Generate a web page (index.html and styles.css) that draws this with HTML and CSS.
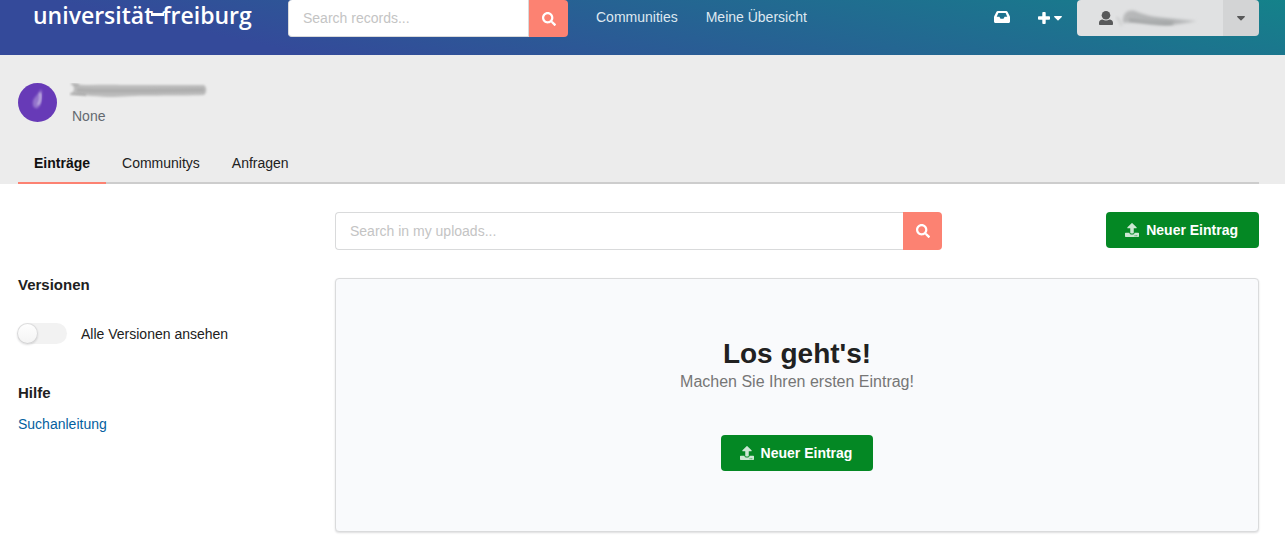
FILE: index.html
```html
<!DOCTYPE html>
<html lang="de">
<head>
<meta charset="utf-8">
<meta name="viewport" content="width=device-width, initial-scale=1">
<title>Einträge</title>
<link rel="stylesheet" href="styles.css">
</head>
<body>
<svg class="sprite" aria-hidden="true">
  <symbol id="i-search" viewBox="0 0 512 512"><path d="M505 442.700L405.300 343c-4.500-4.500-10.600-7-17-7H372c27.600-35.300 44-79.700 44-128C416 93.100 322.900 0 208 0S0 93.100 0 208s93.100 208 208 208c48.300 0 92.700-16.400 128-44v16.300c0 6.400 2.500 12.500 7 17l99.700 99.700c9.400 9.400 24.600 9.400 33.900 0l28.300-28.300c9.400-9.400 9.400-24.600.1-34zM208 336c-70.700 0-128-57.200-128-128 0-70.700 57.200-128 128-128 70.700 0 128 57.200 128 128 0 70.700-57.200 128-128 128z"/></symbol>
  <symbol id="i-upload" viewBox="0 0 512 512"><path d="M296 384h-80c-13.300 0-24-10.700-24-24V192h-87.700c-17.800 0-26.700-21.500-14.100-34.100L242.300 5.700c7.500-7.500 19.800-7.500 27.300 0l152.200 152.200c12.600 12.600 3.700 34.100-14.100 34.100H320v168c0 13.300-10.700 24-24 24zm216-8v112c0 13.300-10.700 24-24 24H24c-13.300 0-24-10.700-24-24V376c0-13.300 10.700-24 24-24h136v8c0 30.900 25.100 56 56 56h80c30.900 0 56-25.100 56-56v-8h136c13.300 0 24 10.700 24 24zm-124 88c0-11-9-20-20-20s-20 9-20 20 9 20 20 20 20-9 20-20zm64 0c0-11-9-20-20-20s-20 9-20 20 9 20 20 20 20-9 20-20z"/></symbol>
  <symbol id="i-inbox" viewBox="0 0 16 12"><path fill-rule="evenodd" d="M3.800 0h8.400c.6 0 1 .3 1.300.7l2.300 4.500c.1.300.2.500.2.800v4.500c0 .8-.6 1.500-1.500 1.500h-13C.6 12 0 11.300 0 10.500V6c0-.3.100-.5.200-.8L2.500.7C2.800.3 3.200 0 3.800 0zm.6 2.100L2.700 5.800h2.700L6.500 7.700h3l1.100-1.900h2.700l-1.700-3.700z"/></symbol>
  <symbol id="i-plus" viewBox="0 0 12 12"><path d="M11.200 4.300H7.700V.8c0-.4-.4-.8-.8-.8H5.100c-.4 0-.8.4-.8.8v3.500H.8c-.4 0-.8.4-.8.8v1.800c0 .4.400.8.800.8h3.500v3.500c0 .4.400.8.800.8h1.800c.4 0 .8-.4.800-.8V7.700h3.500c.4 0 .8-.4.800-.8V5.100c0-.4-.4-.8-.8-.8z"/></symbol>
  <symbol id="i-caret" viewBox="0 0 8 5"><path d="M.6 0h6.800c.5 0 .7.600.4 1L4.500 4.300c-.3.300-.7.300-1 0L.2 1C-.1.600.1 0 .6 0z"/></symbol>
  <symbol id="i-user" viewBox="0 0 14 14"><circle cx="7" cy="4.300" r="4.300"/><path d="M3.500 8.500c2.200 1.300 4.800 1.300 7 0C12.600 8.500 14 10 14 11.800V13c0 .6-.4 1-1 1H1c-.6 0-1-.4-1-1v-1.200C0 10 1.400 8.500 3.500 8.500z"/></symbol>
</svg>

<header class="topbar">
  <div class="container topbar-row">
    <a class="brand" href="#">universität<span class="brand-bar"></span>freiburg</a>
    <form class="search search-top">
      <input class="search-input" type="text" placeholder="Search records..." aria-label="Search records">
      <button class="search-button" type="button" aria-label="Suchen"><svg class="icon"><use href="#i-search"/></svg></button>
    </form>
    <nav class="nav">
      <a href="#">Communities</a>
      <a href="#">Meine Übersicht</a>
    </nav>
    <div class="tools">
      <a class="tool" href="#" aria-label="Anfragen"><svg class="icon icon-inbox"><use href="#i-inbox"/></svg></a>
      <button class="tool" type="button" aria-label="Neu"><svg class="icon icon-plus"><use href="#i-plus"/></svg><svg class="caret"><use href="#i-caret"/></svg></button>
      <div class="account">
        <button class="account-main" type="button" aria-label="Profil">
          <svg class="icon"><use href="#i-user"/></svg>
          <svg class="account-name" viewBox="0 0 84 24" aria-hidden="true">
            <defs><filter id="soft" x="-10" y="-10" width="110" height="44" filterUnits="userSpaceOnUse"><feGaussianBlur stdDeviation="1.500"/></filter>
            <linearGradient id="fade"><stop offset="0" stop-color="#b9babb"/><stop offset=".6" stop-color="#aeb0b1"/><stop offset="1" stop-color="#c0c1c2"/></linearGradient></defs>
            <path d="M8 17C7 8 12 3 20 5c10 4 18 6 30 7l32 3c-10 2-22 4-32 4-14-1-28-4-42-2z" fill="url(#fade)" filter="url(#soft)"/>
            <path d="M1 12c4-1 3 4 6 8" stroke="#cccdce" stroke-width="2" fill="none" filter="url(#soft)"/>
            <path d="M14 14c14 2 32 5 44 3" stroke="#a3a5a6" stroke-width="3" fill="none" filter="url(#soft)"/>
          </svg>
        </button>
        <button class="account-more" type="button" aria-label="Menü"><svg class="caret"><use href="#i-caret"/></svg></button>
      </div>
    </div>
  </div>
</header>

<section class="profile">
  <div class="container">
    <div class="identity">
      <svg class="avatar" viewBox="0 0 39 39" aria-hidden="true">
        <defs><filter id="haze" x="-60%" y="-20%" width="220%" height="140%"><feGaussianBlur stdDeviation="1"/></filter></defs>
        <circle cx="19.500" cy="19.500" r="19.500" fill="#673ab7"/>
        <path d="M23 6c2 5 1 13-3 19-3 1-6-1-5-7 1-4 5-6 8-12z" fill="#9474cc" filter="url(#haze)"/>
        <path d="M22 10c1 4 0 9-2 12" stroke="#c9bbe5" stroke-width="2" fill="none" filter="url(#haze)"/>
      </svg>
      <div class="identity-text">
        <svg class="identity-name" viewBox="0 0 140 18" aria-hidden="true">
          <defs><filter id="smear" x="-10" y="-10" width="160" height="40" filterUnits="userSpaceOnUse"><feGaussianBlur stdDeviation="1.200 .8"/></filter></defs>
          <path d="M4 1c14 2 30 0 48 1h83c3 2 3 8 0 10-28 1-66 0-90 2-14 0-30-2-43-3l3-4z" fill="#bcbcbc" filter="url(#smear)"/>
          <path d="M8 7c20 2 90 0 127 0" stroke="#aeaeae" stroke-width="4" fill="none" filter="url(#smear)"/>
          <path d="M1 11l16 1M2 1l8 1" stroke="#8a8a8a" stroke-width="1" filter="url(#smear)"/>
        </svg>
        <div class="identity-sub">None</div>
      </div>
    </div>
    <nav class="tabs">
      <a class="tab tab-active" href="#">Einträge</a>
      <a class="tab" href="#">Communitys</a>
      <a class="tab" href="#">Anfragen</a>
    </nav>
  </div>
</section>

<main class="container layout">
  <aside class="sidebar">
    <h2 class="side-title">Versionen</h2>
    <label class="toggle"><input class="toggle-input" type="checkbox">Alle Versionen ansehen</label>
    <h2 class="side-title">Hilfe</h2>
    <a class="side-link" href="#">Suchanleitung</a>
  </aside>
  <div class="content">
    <div class="content-bar">
      <form class="search search-uploads">
        <input class="search-input" type="text" placeholder="Search in my uploads..." aria-label="Search in my uploads">
        <button class="search-button" type="button" aria-label="Suchen"><svg class="icon"><use href="#i-search"/></svg></button>
      </form>
      <button class="primary" type="button"><svg class="icon"><use href="#i-upload"/></svg>Neuer Eintrag</button>
    </div>
    <section class="empty">
      <h1 class="empty-title">Los geht's!</h1>
      <p class="empty-text">Machen Sie Ihren ersten Eintrag!</p>
      <button class="primary" type="button"><svg class="icon"><use href="#i-upload"/></svg>Neuer Eintrag</button>
    </section>
  </div>
</main>
</body>
</html>
```

FILE: styles.css
```css
* { box-sizing: border-box; }

body {
  margin: 0;
  background: #fff;
  color: #212121;
  font: 14px/20px "Liberation Sans", Arial, sans-serif;
}

a { color: inherit; text-decoration: none; }
button, input { margin: 0; font: inherit; }
button { border: 0; padding: 0; cursor: pointer; }

.sprite { position: absolute; width: 0; height: 0; }
.container { padding: 0 26px 0 18px; }
.icon { display: block; width: 14px; height: 14px; fill: currentColor; }
.caret { display: block; width: 8px; height: 5px; fill: currentColor; }

/* Top bar */
.topbar {
  background: linear-gradient(12deg, #344a9a 20%, #14828a 100%);
  padding-bottom: 18px;
}
.topbar-row { display: flex; align-items: flex-start; }
.brand {
  width: 270px;
  padding-left: 15px;
  color: #fff;
  font: 600 23px/30px "Open Sans", sans-serif;
  white-space: nowrap;
}
.brand-bar {
  display: inline-block;
  width: 13px;
  height: 3px;
  margin: 0 -2px;
  background: #fff;
  vertical-align: 8px;
}

.search { display: flex; height: 38px; }
.search-top { width: 280px; height: 37px; }
.search-input {
  flex: 1;
  min-width: 0;
  padding: 0 14px;
  border: 1px solid #d9dadb;
  border-radius: 4px 0 0 4px;
  background: #fff;
  color: #212121;
}
.search-uploads .search-input { border-right: 0; }
.search-top .search-input { border-top: 0; }
.search-input::placeholder { color: #c4c4c4; opacity: 1; }
.search-button {
  display: grid;
  place-items: center;
  width: 39px;
  border-radius: 0 4px 4px 0;
  background: #fc8272;
  color: #fff;
}

.nav { display: flex; gap: 28px; padding: 7px 28px; color: #dfe8f0; }
.tools { display: flex; margin-left: auto; color: #fff; }
.tool {
  display: flex;
  align-items: center;
  gap: 4px;
  height: 36px;
  margin-right: 15px;
  background: none;
  color: #fff;
}
.tool:first-child { height: 34px; margin-right: 28px; }
.icon-inbox { width: 16px; height: 12px; }
.icon-plus { width: 12px; height: 12px; }
.account { display: flex; height: 36px; border-radius: 4px; overflow: hidden; color: #58595a; }
.account-main {
  display: flex;
  align-items: center;
  gap: 2px;
  width: 146px;
  padding-left: 22px;
  background: #e0e1e2;
  color: inherit;
}
.account-name { width: 84px; height: 24px; }
.account-more { display: grid; place-items: center; width: 36px; background: #d3d4d5; color: inherit; }

/* Profile */
.profile { padding-top: 28px; background: #ececec; }
.identity { display: flex; gap: 12px; }
.avatar { width: 39px; height: 39px; }
.identity-name { display: block; width: 140px; height: 18px; }
.identity-sub { padding: 5px 0 0 3px; color: #636970; }
.tabs { display: flex; margin-top: 14px; border-bottom: 2px solid #cdcdcd; }
.tab { margin-bottom: -2px; padding: 13px 16px 9px; border-bottom: 2px solid transparent; }
.tab-active { border-color: #fc8272; color: #111; font-weight: bold; }

/* Main */
.layout {
  display: grid;
  grid-template-columns: minmax(0, 289fr) minmax(0, 924fr);
  gap: 28px;
  padding-top: 28px;
  padding-bottom: 20px;
}
.sidebar { padding-top: 63px; }
.side-title { margin: 0; font-size: 15px; line-height: 20px; }
.toggle { display: flex; align-items: center; gap: 14px; margin: 28px 0 39px; }
.toggle-input {
  appearance: none;
  display: block;
  width: 49px;
  height: 21px;
  margin: 0;
  border-radius: 11px;
  background: #f2f2f2;
}
.toggle-input::before {
  content: "";
  display: block;
  width: 21px;
  height: 21px;
  margin-left: -1px;
  border-radius: 50%;
  background: linear-gradient(#fff, #f3f3f3);
  box-shadow: 0 1px 2px rgba(34, 36, 38, .15), inset 0 0 0 1px rgba(34, 36, 38, .15);
}
.toggle-input:checked::before { margin-left: 28px; }
.side-link { display: block; margin-top: 11px; color: #045fa0; }

.content-bar { display: flex; justify-content: space-between; align-items: flex-start; margin-bottom: 28px; }
.search-uploads { flex: 0 1 607px; }
.primary {
  display: inline-flex;
  align-items: center;
  gap: 7px;
  height: 36px;
  padding: 0 21px 0 19px;
  border-radius: 4px;
  background: #048824;
  color: #fff;
  font-weight: bold;
  white-space: nowrap;
}
.primary .icon { opacity: .8; }
.empty {
  padding: 57px 14px 60px;
  border: 1px solid #dadbdc;
  border-radius: 4px;
  background: #f9fafc;
  box-shadow: 0 1px 2px rgba(34, 36, 38, .15);
  text-align: center;
}
.empty-title { margin: 0; font-size: 28px; line-height: 36px; }
.empty-text { margin: 0 0 43px; color: #767676; font-size: 16px; line-height: 20px; }
```
